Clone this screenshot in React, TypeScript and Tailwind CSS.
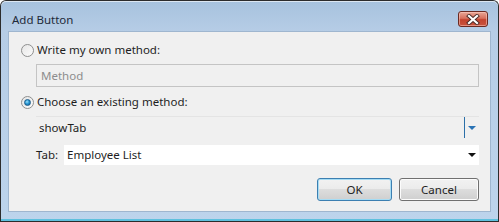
import React from 'react';

const font = { fontFamily: '"Noto Sans", "Open Sans", sans-serif' };

const Radio = ({ checked }: { checked?: boolean }) => (
  <span className="relative flex h-[13px] w-[13px] shrink-0 items-center justify-center rounded-full border border-[#8e8f8f] bg-gradient-to-br from-[#e6e6e6] to-[#fbfbfb]">
    {checked && (
      <span className="h-[7px] w-[7px] rounded-full border border-[#1a5c8c] bg-[radial-gradient(circle_at_40%_35%,#9ee0fa_0%,#2a9ad6_45%,#0c5a92_100%)]" />
    )}
  </span>
);

const CloseButton = () => (
  <div className="flex h-[16px] w-[30px] items-center justify-center rounded-[3px] border border-[#6b2a22] bg-[linear-gradient(#e8a797_0%,#d8705d_45%,#c3432e_55%,#c9543f_100%)] shadow-[inset_0_0_0_1px_rgba(255,210,200,0.5)]">
    <svg width="14" height="11" viewBox="0 0 14 11">
      <path d="M3 2 L11 9 M11 2 L3 9" stroke="#4a2a26" strokeWidth="4" strokeLinecap="square" />
      <path d="M3 2 L11 9 M11 2 L3 9" stroke="#ffffff" strokeWidth="2.2" strokeLinecap="square" />
    </svg>
  </div>
);

const Caret = ({ color }: { color: string }) => (
  <svg width="8" height="4" viewBox="0 0 8 4">
    <path d="M0 0 L8 0 L4 4 Z" fill={color} />
  </svg>
);

export default function App() {
  return (
    <div className="h-[222px] w-[499px] overflow-hidden bg-white text-[11.5px] text-[#1e1e1e]" style={font}>
      <div className="flex h-[230px] w-[499px] flex-col rounded-t-[6px] border border-b-0 border-[#2c2c2c] bg-[linear-gradient(#a7c2de_0px,#b6cde6_31px,#bdd4ec_100%)]">
        {/* Title bar */}
        <div className="flex h-[30px] shrink-0 items-start justify-between rounded-t-[5px] shadow-[inset_0_1px_0_rgba(255,255,255,0.6)]">
          <span className="pl-[11px] pt-[11px] text-[11.5px] leading-[16px] text-[#1e2a3a]">Add Button</span>
          <div className="mr-[10px] mt-[10px]">
            <CloseButton />
          </div>
        </div>

        <div className="flex px-[7px]">
          {/* Client area */}
          <div className="flex h-[181px] w-[484px] flex-col border border-[#9fb6cf] bg-[#f0f0f0] pl-[12px] pr-[11px]">
            <div className="mt-[11px] flex h-[14px] items-center gap-[3px]">
              <Radio />
              <span className="leading-[14px]">Write my own method:</span>
            </div>

            <div className="ml-[15px] mt-[7px] flex h-[23px] items-center border border-[#c4c4c4] bg-[#f0f0f0] px-[4px] text-[#8d8d8d]">
              Method
            </div>

            <div className="mt-[8px] flex h-[14px] items-center gap-[3px]">
              <Radio checked />
              <span className="leading-[14px]">Choose an existing method:</span>
            </div>

            <div className="ml-[15px] mt-[7px] flex h-[22px] items-stretch border-t border-[#e4e4e4] bg-[#f0f0f0]">
              <span className="flex flex-1 items-center pl-[3px]">showTab</span>
              <span className="flex w-[15px] items-center justify-center border-l border-[#2b6fa8] pt-[1px]">
                <Caret color="#2a73b5" />
              </span>
            </div>

            <div className="ml-[15px] mt-[7px] flex h-[20px] items-center">
              <span className="w-[28px]">Tab:</span>
              <div className="flex h-[20px] flex-1 items-center bg-white pl-[3px]">
                <span className="flex-1">Employee List</span>
                <span className="flex w-[15px] items-center justify-center">
                  <Caret color="#111111" />
                </span>
              </div>
            </div>

            <div className="mt-[13px] flex justify-end gap-[7px]">
              <button className="h-[23px] w-[75px] rounded-[3px] border border-[#3c7fb1] bg-[linear-gradient(#f2f2f2_0%,#ebebeb_50%,#dddddd_50%,#cfcfcf_100%)] text-[11.5px] text-[#1e1e1e] shadow-[inset_0_0_0_1px_#a6dcf4]">
                OK
              </button>
              <button className="h-[23px] w-[80px] rounded-[3px] border border-[#707070] bg-[linear-gradient(#f2f2f2_0%,#ebebeb_50%,#dddddd_50%,#cfcfcf_100%)] text-[11.5px] text-[#1e1e1e] shadow-[inset_0_0_0_1px_#fcfcfc]">
                Cancel
              </button>
            </div>
          </div>
        </div>
        <div className="h-[7px] w-full shrink-0" />
        <div className="h-[2px] w-full shrink-0 bg-[#5fc0dd]" />
        <div className="h-[1px] w-full shrink-0 bg-[#2c2c2c]" />
      </div>
    </div>
  );
}
